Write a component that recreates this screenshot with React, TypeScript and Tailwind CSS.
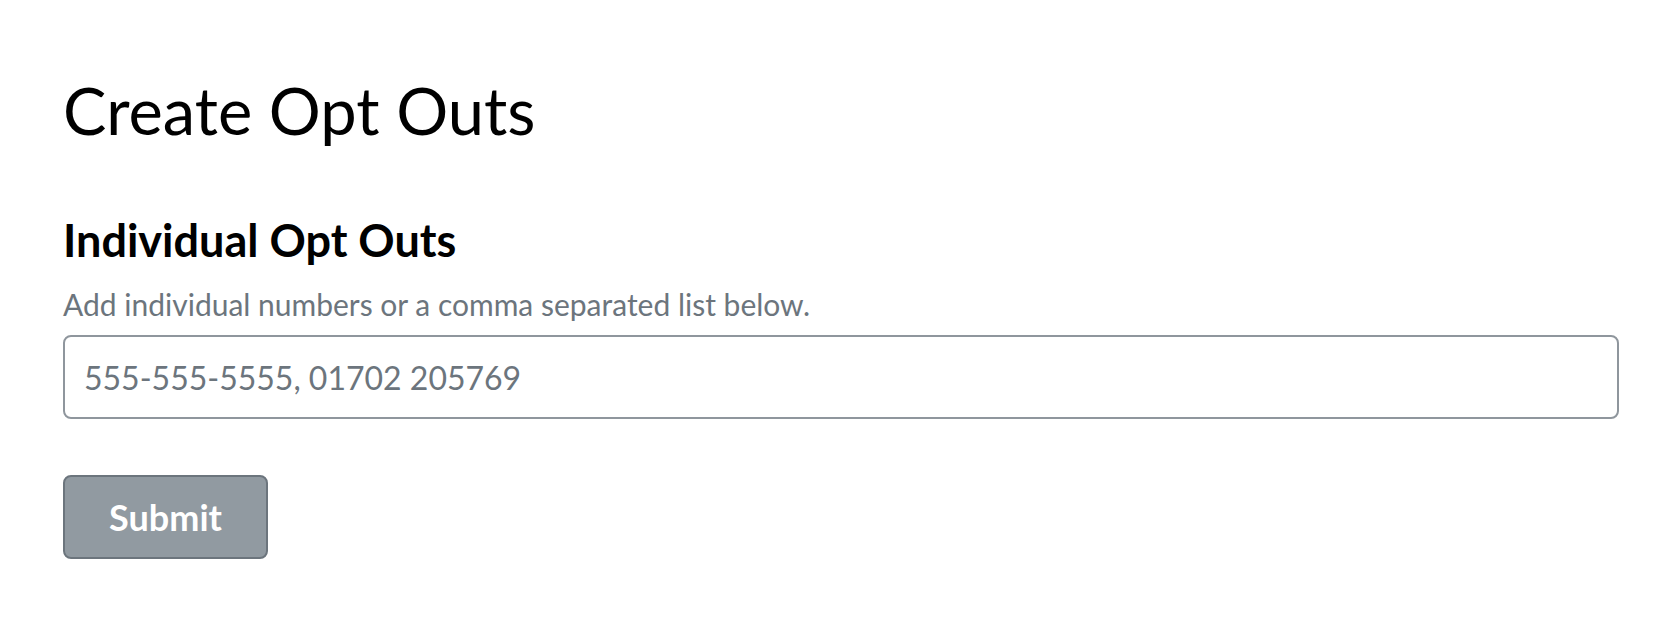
import React from "react";

const App = () => {
  return (
    <div className="min-h-[620px] bg-white pl-[63px] pr-[48px] pt-[71px] font-['Lato','Liberation_Sans',sans-serif]">
      <h1 className="text-[65px] leading-[1.2] font-normal text-[#000000]">
        Create Opt Outs
      </h1>

      <div className="mt-[64px]">
        <h2 className="text-[45px] leading-[1.2] font-bold text-[#000000]">
          Individual Opt Outs
        </h2>
        <p className="mt-[18px] text-[30px] leading-[1.3] text-[#6c757d]">
          Add individual numbers or a comma separated list below.
        </p>
        <input
          type="text"
          placeholder="555-555-5555, 01702 205769"
          className="mt-[11px] block w-full h-[84px] px-[19px] rounded-[8px] border-2 border-[#8f969d] text-[32px] text-[#212529] placeholder:text-[#6c757d] outline-none"
        />
        <button
          type="button"
          className="mt-[56px] w-[205px] h-[84px] rounded-[8px] border-2 border-[#6c757d] bg-[#919aa1] text-[36px] font-bold text-white"
        >
          Submit
        </button>
      </div>
    </div>
  );
};

export default App;
